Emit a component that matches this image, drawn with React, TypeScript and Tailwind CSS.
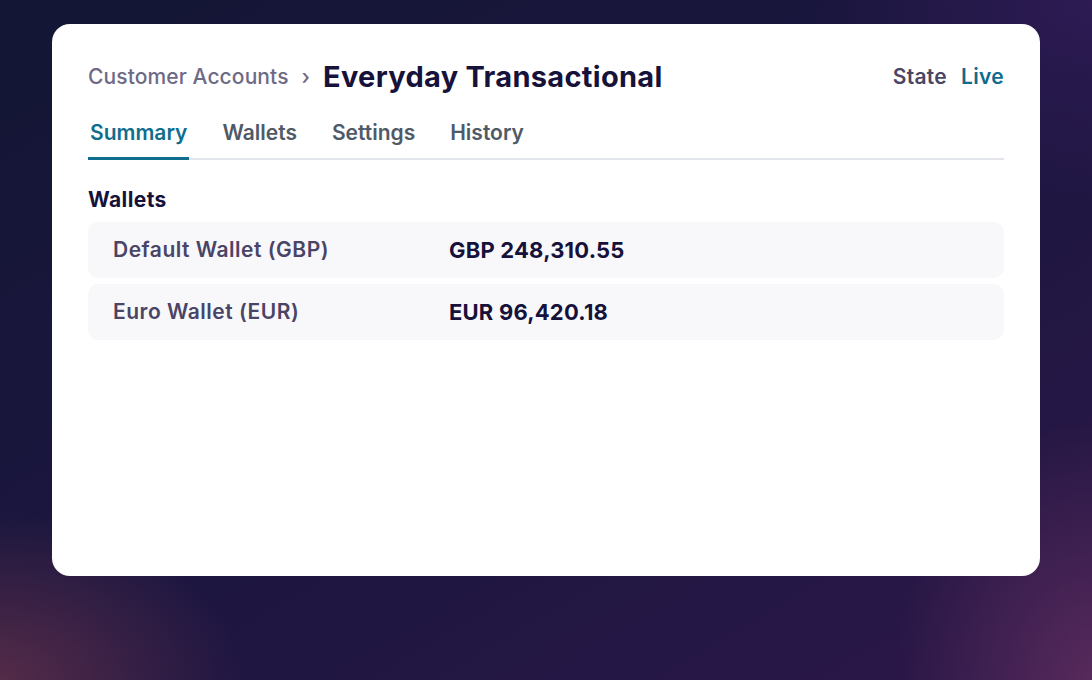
import { useState } from "react";

const tabs = ["Summary", "Wallets", "Settings", "History"];

const wallets = [
  { name: "Default Wallet (GBP)", balance: "GBP 248,310.55" },
  { name: "Euro Wallet (EUR)", balance: "EUR 96,420.18" },
];

const App = () => {
  const [active, setActive] = useState("Summary");

  return (
    <div className="min-h-screen w-full bg-[radial-gradient(ellipse_240px_170px_at_0%_100%,rgba(130,60,80,0.55),transparent),radial-gradient(ellipse_200px_260px_at_100%_100%,rgba(130,60,110,0.5),transparent),radial-gradient(ellipse_280px_200px_at_100%_0%,rgba(60,30,100,0.55),transparent),linear-gradient(150deg,#131634_0%,#1c1640_50%,#2b1748_100%)] px-[52px] pt-[24px] font-['Inter',sans-serif]">
      <div className="flex h-[552px] flex-col rounded-[18px] bg-white px-[36px] pt-[33px]">
        {/* Header */}
        <div className="flex h-10 items-center justify-between">
          <div className="flex items-center gap-[13px]">
            <span className="text-[21px] font-medium tracking-[0.1px] text-[#6e6a86]">Customer Accounts</span>
            <span className="text-[21px] font-medium text-[#6e6a86]">›</span>
            <h1 className="text-[29px] font-bold tracking-[0.3px] text-[#16123a]">Everyday Transactional</h1>
          </div>
          <div className="flex items-center gap-[14px] text-[21px] font-semibold tracking-[0.3px]">
            <span className="text-[#4a4565]">State</span>
            <span className="text-[#106b8c]">Live</span>
          </div>
        </div>

        {/* Tabs */}
        <div className="mt-[22px] flex gap-[31px] border-b-2 border-[#e2e5e9]">
          {tabs.map((tab) => (
            <button
              key={tab}
              onClick={() => setActive(tab)}
              className={
                tab === active
                  ? "-mb-[2px] border-b-[3px] border-[#0f6e8e] px-[2px] pb-[10px] text-[21px] font-semibold leading-7 text-[#0f6e8e]"
                  : "-mb-[2px] border-b-[3px] border-transparent px-[2px] pb-[10px] text-[21px] font-semibold leading-7 text-[#505a67]"
              }
            >
              {tab}
            </button>
          ))}
        </div>

        {/* Wallets */}
        <h2 className="mt-[26px] text-[21px] font-bold leading-7 tracking-[0.4px] text-[#16123a]">Wallets</h2>
        <div className="mt-[8px] flex flex-col gap-[6px]">
          {wallets.map((w) => (
            <div key={w.name} className="flex h-14 items-center rounded-[10px] bg-[#f8f8fb] px-[25px]">
              <span className="w-[336px] text-[21px] font-semibold tracking-[0.5px] text-[#4a4466]">{w.name}</span>
              <span className="text-[22px] font-bold tracking-[0.2px] text-[#16123a]">{w.balance}</span>
            </div>
          ))}
        </div>
      </div>
    </div>
  );
};

export default App;
